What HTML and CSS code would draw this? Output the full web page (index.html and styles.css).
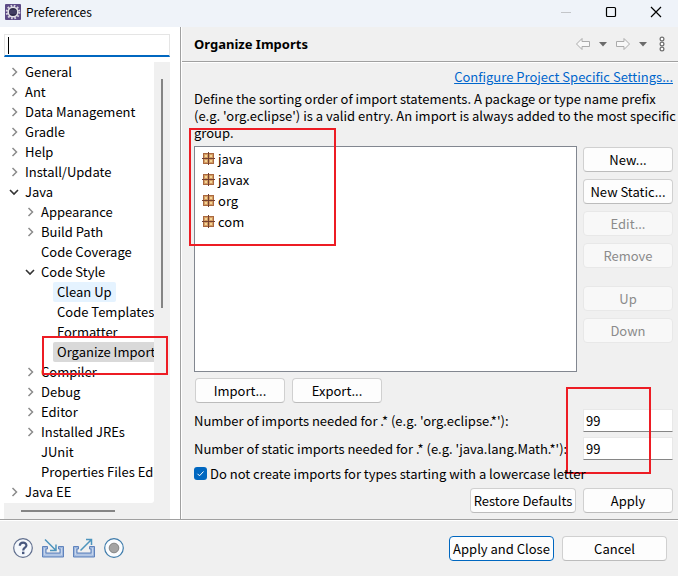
FILE: index.html
```html
<!DOCTYPE html>
<html lang="en">
<head>
<meta charset="utf-8">
<title>Preferences</title>
<link rel="stylesheet" href="styles.css">
</head>
<body>
<svg class="sprites" aria-hidden="true">
  <symbol id="closed" viewBox="0 0 10 10"><path d="M3.5 1 L7.5 5 L3.5 9" fill="none" stroke="#8b8b8b" stroke-width="1.5"/></symbol>
  <symbol id="open" viewBox="0 0 10 10"><path d="M1 3 L5 7 L9 3" fill="none" stroke="#333" stroke-width="1.6"/></symbol>
  <symbol id="package" viewBox="0 0 13 13">
    <rect x="1" y="1" width="11" height="11" fill="#a9683f"/>
    <path d="M2 2h4v4h-4z M7 2h4v4h-4z M2 7h4v4h-4z M7 7h4v4h-4z" fill="#d49c62"/>
    <path d="M3 3h2v2h-2z M8 3h2v2h-2z M3 8h2v2h-2z M8 8h2v2h-2z" fill="#f3d596"/>
    <path d="M6.5 0v13M0 6.5h13" stroke="#74402f"/>
  </symbol>
  <symbol id="arrow" viewBox="0 0 16 14"><path d="M1.5 7 L7 1.5 V4.500 H14.500 V9.500 H7 V12.500 Z" fill="#f8f8f8" stroke="#ababab" stroke-linejoin="round"/></symbol>
  <symbol id="caret" viewBox="0 0 8 5"><path d="M0 0h8L4 4.500z" fill="#6b6b6b"/></symbol>
  <symbol id="tray" viewBox="0 0 22 20"><path d="M.5 8.500h5v2.500h-1.500v4h14v-4h-1.500v-2.500h5v10.500h-21z" fill="#9eb6dc" stroke="#5f83bd"/><path d="M2.500 10v7h17v-7" fill="none" stroke="#c5d5ec"/></symbol>
</svg>

<header class="titlebar">
  <svg class="app-icon" viewBox="0 0 16 16" aria-hidden="true">
    <rect width="16" height="16" rx="1" fill="#5c4a86"/>
    <circle cx="8" cy="8" r="6.300" fill="none" stroke="#d9d6e0" stroke-width="2" stroke-dasharray="1.700 1.600"/>
    <circle cx="8" cy="8" r="4.800" fill="#2f2b49" stroke="#e4e2e8" stroke-width="1.600"/>
    <path d="M4.500 7h7M4.500 9h7" stroke="#55507a"/>
  </svg>
  <span class="app-name">Preferences</span>
  <button class="window-button" aria-label="Minimize" disabled><svg viewBox="0 0 12 12"><path d="M1 6.500h10" stroke="#c3c5c9"/></svg></button>
  <button class="window-button" aria-label="Maximize"><svg viewBox="0 0 12 12"><rect x="1.500" y="1.500" width="9" height="9" rx="1" fill="none" stroke="#000" stroke-width="1.200"/></svg></button>
  <button class="window-button" aria-label="Close"><svg viewBox="0 0 12 12"><path d="M1 1l10 10M11 1L1 11" stroke="#000" stroke-width="1.200"/></svg></button>
</header>

<div class="workspace">
  <nav class="sidebar" aria-label="Preference pages">
    <input class="filter" type="text" aria-label="Filter">
    <span class="text-cursor"></span>
    <div class="tree-pane">
      <ul class="tree">
        <li><button class="node"><svg><use href="#closed"/></svg><span>General</span></button></li>
        <li><button class="node"><svg><use href="#closed"/></svg><span>Ant</span></button></li>
        <li><button class="node"><svg><use href="#closed"/></svg><span>Data Management</span></button></li>
        <li><button class="node"><svg><use href="#closed"/></svg><span>Gradle</span></button></li>
        <li><button class="node"><svg><use href="#closed"/></svg><span>Help</span></button></li>
        <li><button class="node"><svg><use href="#closed"/></svg><span>Install/Update</span></button></li>
        <li><button class="node"><svg><use href="#open"/></svg><span>Java</span></button>
          <ul>
            <li><button class="node"><svg><use href="#closed"/></svg><span>Appearance</span></button></li>
            <li><button class="node"><svg><use href="#closed"/></svg><span>Build Path</span></button></li>
            <li><button class="node"><svg></svg><span>Code Coverage</span></button></li>
            <li><button class="node"><svg><use href="#open"/></svg><span>Code Style</span></button>
              <ul>
                <li><button class="node"><svg></svg><span class="hovered">Clean Up</span></button></li>
                <li><button class="node"><svg></svg><span>Code Templates</span></button></li>
                <li><button class="node"><svg></svg><span>Formatter</span></button></li>
                <li><button class="node"><svg></svg><span class="selected">Organize Imports</span></button></li>
              </ul>
            </li>
            <li><button class="node"><svg><use href="#closed"/></svg><span>Compiler</span></button></li>
            <li><button class="node"><svg><use href="#closed"/></svg><span>Debug</span></button></li>
            <li><button class="node"><svg><use href="#closed"/></svg><span>Editor</span></button></li>
            <li><button class="node"><svg><use href="#closed"/></svg><span>Installed JREs</span></button></li>
            <li><button class="node"><svg></svg><span>JUnit</span></button></li>
            <li><button class="node"><svg></svg><span>Properties Files Editor</span></button></li>
          </ul>
        </li>
        <li><button class="node"><svg><use href="#closed"/></svg><span>Java EE</span></button></li>
      </ul>
      <div class="scroll-y"></div>
      <div class="scroll-x"></div>
      <div class="mark mark-page"></div>
    </div>
  </nav>

  <main class="page">
    <div class="page-head">
      <h1>Organize Imports</h1>
      <button class="tool" aria-label="Back"><svg class="arrow"><use href="#arrow"/></svg></button>
      <button class="tool" aria-label="Back history"><svg class="caret"><use href="#caret"/></svg></button>
      <button class="tool" aria-label="Forward"><svg class="arrow flipped"><use href="#arrow"/></svg></button>
      <button class="tool" aria-label="Forward history"><svg class="caret"><use href="#caret"/></svg></button>
      <button class="tool menu" aria-label="Menu"><svg class="dots" viewBox="0 0 6 16"><g fill="#fff" stroke="#707070" stroke-width="1.200"><circle cx="3" cy="3" r="1.900"/><circle cx="3" cy="8" r="1.900"/><circle cx="3" cy="13" r="1.900"/></g></svg></button>
    </div>
    <div class="page-body">
      <a class="project-link" href="#">Configure Project Specific Settings...</a>
      <p class="intro">Define the sorting order of import statements. A package or type name prefix (e.g. 'org.eclipse') is a valid entry. An import is always added to the most specific group.</p>
      <div class="order">
        <ul class="packages">
          <li><svg><use href="#package"/></svg>java</li>
          <li><svg><use href="#package"/></svg>javax</li>
          <li><svg><use href="#package"/></svg>org</li>
          <li><svg><use href="#package"/></svg>com</li>
        </ul>
        <div class="actions">
          <button class="btn">New...</button>
          <button class="btn">New Static...</button>
          <button class="btn" disabled>Edit...</button>
          <button class="btn" disabled>Remove</button>
          <button class="btn spaced" disabled>Up</button>
          <button class="btn" disabled>Down</button>
        </div>
        <div class="mark mark-order"></div>
      </div>
      <div class="transfer">
        <button class="btn">Import...</button>
        <button class="btn">Export...</button>
      </div>
      <div class="limits">
        <label for="limit">Number of imports needed for .* (e.g. 'org.eclipse.*'):</label>
        <input id="limit" type="text" value="99">
        <label for="static-limit">Number of static imports needed for .* (e.g. 'java.lang.Math.*'):</label>
        <input id="static-limit" type="text" value="99">
        <div class="mark mark-limits"></div>
      </div>
      <label class="check"><input type="checkbox" checked><svg viewBox="0 0 13 13" aria-hidden="true"><path d="M3.500 6.800l2 2 4-4.300" fill="none" stroke="#fff"/></svg>Do not create imports for types starting with a lowercase letter</label>
      <div class="page-actions">
        <button class="btn btn-fit">Restore Defaults</button>
        <button class="btn">Apply</button>
      </div>
    </div>
  </main>
</div>

<footer class="footer">
  <button class="tool" aria-label="Help"><svg class="foot-icon" viewBox="0 0 20 20"><circle cx="10" cy="10" r="9.300" fill="#f5f8fc" stroke="#62708f" stroke-width="1.200"/><path d="M6.800 7.800c0-4.300 6.600-4.200 6.600-.4 0 2.300-3.200 2.400-3.200 5" fill="none" stroke="#48587f" stroke-width="2.200"/><rect x="9" y="13.700" width="2.400" height="2.400" fill="#48587f"/></svg></button>
  <button class="tool" aria-label="Import preferences"><svg class="tray-icon" viewBox="0 0 22 20"><use href="#tray"/><path d="M3 1.500l10.500 10.500M14 6.500V12.500H8" fill="none" stroke="#4d94bd" stroke-width="1.500"/></svg></button>
  <button class="tool" aria-label="Export preferences"><svg class="tray-icon" viewBox="0 0 22 20"><use href="#tray"/><path d="M7.500 12.500L18 2M13 1.500h5.500V7" fill="none" stroke="#4d94bd" stroke-width="1.500"/></svg></button>
  <button class="tool" aria-label="Record preferences"><svg class="foot-icon" viewBox="0 0 20 20"><circle cx="10" cy="10" r="9.300" fill="#fafcfe" stroke="#3f7cab" stroke-width="1.200"/><circle cx="10" cy="10" r="4.800" fill="#a4a4a4" stroke="#858585"/></svg></button>
  <div class="footer-actions">
    <button class="btn btn-wide primary">Apply and Close</button>
    <button class="btn btn-wide">Cancel</button>
  </div>
</footer>
</body>
</html>
```
FILE: styles.css
```css
* { box-sizing: border-box; }

body {
  margin: 0;
  min-height: 100vh;
  display: flex;
  flex-direction: column;
  background: #f0f0f0;
  color: #000;
  font: 13px/17px "Noto Sans CJK SC", "Noto Sans", sans-serif;
}

button, input { font: inherit; color: inherit; }
ul { list-style: none; margin: 0; padding: 0; }
svg { display: block; flex: none; }
.sprites { position: absolute; width: 0; height: 0; }

.titlebar {
  display: flex;
  align-items: center;
  height: 27px;
  padding: 0 0 4px 5px;
  background: #eff3f9;
}
.app-icon { width: 16px; height: 16px; }
.app-name { flex: 1; margin-left: 5px; font-size: 12px; }
.window-button {
  width: 45px;
  height: 22px;
  padding: 0;
  border: 0;
  background: none;
}
.window-button svg { width: 12px; height: 12px; margin: 0 auto; }

.workspace { flex: 1; display: flex; border-bottom: 1px solid #a0a0a0; }

.sidebar {
  position: relative;
  flex: none;
  display: flex;
  flex-direction: column;
  width: 181px;
  padding: 7px 10px 0 4px;
  border-right: 1px solid #a0a0a0;
  background: #fff;
}
.filter {
  width: 100%;
  height: 23px;
  margin-bottom: 5px;
  padding: 0 4px;
  border: 1px solid #e5e5e5;
  border-bottom: 2px solid #0067c0;
  background: #fff;
  outline: 0;
}
.text-cursor {
  position: absolute;
  left: 8px;
  top: 10px;
  width: 1px;
  height: 17px;
  background: #000;
}

.tree-pane {
  position: relative;
  flex: 1;
  display: grid;
  grid-template-columns: minmax(0, 1fr) 16px;
  grid-template-rows: 1fr 16px;
  background: #f0f0f0;
}
.tree { overflow: hidden; background: #fff; border-radius: 0 0 3px 0; }
.tree ul { padding-left: 16px; }
.node {
  display: flex;
  align-items: center;
  height: 20px;
  padding: 0 0 0 5px;
  border: 0;
  background: none;
  white-space: nowrap;
}
.node svg { width: 10px; height: 10px; margin-right: 2px; }
.node span { padding: 0 4px; line-height: 20px; border-radius: 2px; }
.node .hovered { background: #e5f3ff; }
.node .selected { background: #d9d9d9; }
.scroll-y::before {
  content: "";
  display: block;
  width: 2px;
  height: 229px;
  margin: 17px 0 0 7px;
  background: #858585;
}
.scroll-x::before {
  content: "";
  display: block;
  width: 94px;
  height: 2px;
  margin: 7px 0 0 17px;
  background: #858585;
}

.page { flex: 1; min-width: 0; border-left: 1px solid #fff; }
.page-head {
  display: flex;
  align-items: center;
  gap: 8px;
  height: 35px;
  padding: 0 13px 0 12px;
  border-bottom: 1px solid #a0a0a0;
}
.page-head h1 { flex: 1; margin: 0; font: bold 13px/17px "Noto Sans", sans-serif; }
.tool { padding: 0; border: 0; background: none; }
.menu { margin-left: 4px; }
.arrow { width: 16px; height: 14px; }
.flipped { transform: scaleX(-1); }
.caret { width: 8px; height: 5px; }
.dots { width: 6px; height: 16px; }

.page-body {
  display: flex;
  flex-direction: column;
  padding: 5px 5px 6px 12px;
  border-top: 1px solid #fff;
}
.project-link { align-self: flex-end; margin-bottom: 5px; color: #0066cc; }
.intro { margin: 0 -5px 5px 0; }

.order { position: relative; display: flex; gap: 6px; }
.packages {
  flex: 1;
  min-height: 226px;
  padding: 1px 7px;
  border: 1px solid #828790;
  background: #fff;
}
.packages li { display: flex; align-items: center; gap: 3px; height: 21px; }
.packages svg { width: 13px; height: 13px; }
.actions { display: flex; flex-direction: column; gap: 7px; padding-top: 1px; }
.btn {
  width: 90px;
  height: 25px;
  padding: 0;
  border: 1px solid #d0d0d0;
  border-bottom-color: #bcbcbc;
  border-radius: 4px;
  background: #fdfdfd;
}
.btn:disabled { border-color: #e8e8e8; background: #f8f8f8; color: #8b8b8b; }
.btn-fit { width: 106px; }
.btn-wide { width: 105px; }
.primary { border-color: #0067c0; }
.spaced { margin-top: 11px; }

.transfer { display: flex; gap: 7px; margin: 6px 0; padding-left: 1px; }
.limits {
  position: relative;
  display: grid;
  grid-template-columns: 1fr 90px;
  gap: 5px 6px;
  align-items: center;
}
.limits label { white-space: nowrap; }
.limits input {
  width: 100%;
  height: 23px;
  padding: 0 2px;
  border: 1px solid #e8e8e8;
  border-bottom-color: #868686;
  background: #fff;
}
.check { position: relative; display: flex; align-items: center; gap: 3px; margin: 5px 0 6px; }
.check input {
  appearance: none;
  width: 13px;
  height: 13px;
  margin: 0;
  border-radius: 3px;
  background: #0067c0;
}
.check svg { position: absolute; left: 0; width: 13px; height: 13px; }
.page-actions { display: flex; justify-content: flex-end; gap: 7px; }

.footer {
  display: flex;
  align-items: center;
  gap: 9px;
  height: 56px;
  padding: 0 11px 2px 13px;
  border-top: 1px solid #fff;
}
.foot-icon { width: 20px; height: 20px; }
.tray-icon { width: 22px; height: 20px; }
.footer-actions { display: flex; gap: 8px; margin: 2px 0 0 auto; }

.mark { position: absolute; border: 2px solid #ed1c24; pointer-events: none; }
.mark-order { left: -5px; top: -18px; width: 147px; height: 118px; }
.mark-page { left: 38px; top: 274px; width: 126px; height: 39px; }
.mark-limits { right: 22px; top: -22px; width: 85px; height: 87px; }
```
